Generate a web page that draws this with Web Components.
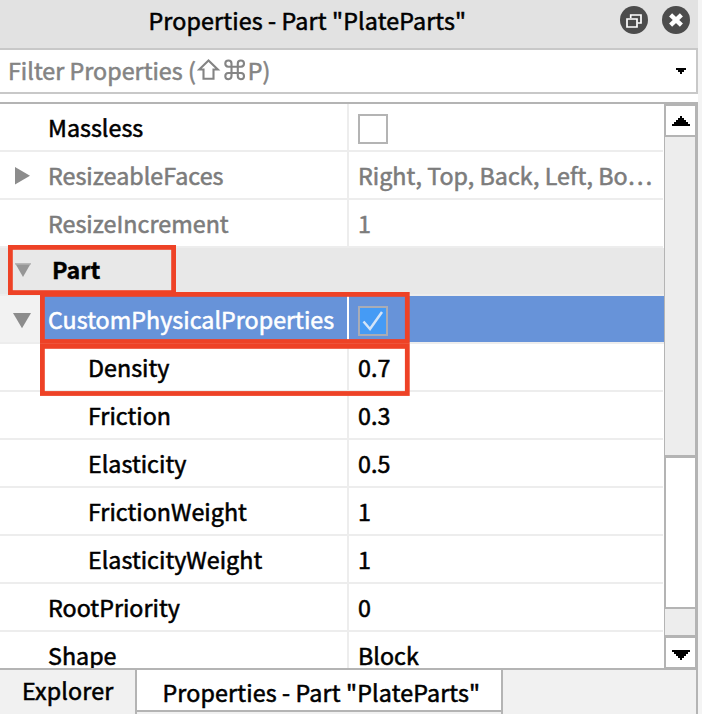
<!DOCTYPE html>
<html lang="en">
<head>
<meta charset="utf-8">
<title>Properties</title>
<style>
  html, body { margin: 0; height: 100%; }
  body { width: 702px; height: 714px; overflow: hidden; background: #f4f4f4;
    font: 400 23.25px/46px "Noto Sans CJK SC", "Noto Sans", sans-serif; color: #000; letter-spacing: .03px; -webkit-text-stroke: .55px currentColor; }
</style>
</head>
<body>
<properties-panel></properties-panel>
<script>
const define = (name, html, setup) => customElements.define(name, class extends HTMLElement {
  connectedCallback() {
    if (this.shadowRoot) return;
    const t = document.createElement('template');
    t.innerHTML = html;
    this.attachShadow({ mode: 'open' }).append(t.content.cloneNode(true));
    if (setup) setup(this, this.shadowRoot);
  }
});

define('panel-title', `
<style>
  :host { display: grid; grid-template-columns: 1fr auto; height: 48px; box-sizing: border-box; background: #e2e2e2; padding: 0 8px 0 148.5px; }
  span { line-height: 40px; white-space: nowrap; letter-spacing: .14px; }
  div { display: flex; gap: 14px; padding-top: 6px; }
  svg { display: block; }
</style>
<span><slot></slot></span>
<div>
  <svg width="28" height="28" viewBox="0 0 28 28"><circle cx="14" cy="14" r="14" fill="#4c4c4c"/><g fill="none" stroke="#fff" stroke-width="1.7"><path d="M10.7 12V9H21v8h-3.5"/><path d="M7 13h10v8H7z"/></g></svg>
  <svg width="28" height="28" viewBox="0 0 28 28"><circle cx="14" cy="14" r="14" fill="#4c4c4c"/><path d="M8.6 8.8l10.8 10.4M19.4 8.8L8.6 19.2" stroke="#fff" stroke-width="4.4"/></svg>
</div>`);

define('filter-field', `
<style>
  :host { display: flex; justify-content: space-between; align-items: center; height: 46px; box-sizing: border-box;
    border: 2px solid #c8c8c8; border-left: 0; background: #fff; color: #848484; padding: 0 10px 0 8px; }
  span { display: flex; align-items: center; line-height: 40px; margin-top: -2px; }
  svg { display: block; }
  .keys { margin: 0 1px 0 1px; }
</style>
<span><slot></slot><svg class="keys" width="50" height="24" viewBox="0 0 50 24" fill="none" stroke="#848484" stroke-width="2.1"><path d="M11.5 2.5L2.2 11.5h4.3v9.2h10v-9.2h4.3z"/><path d="M34.5 8.7h6.3v6.3h-6.3zM34.5 8.7h-3.2a3.1 3.1 0 1 1 3.2-3.1zM40.8 8.7h3.2a3.1 3.1 0 1 0-3.2-3.1zM34.5 15h-3.2a3.1 3.1 0 1 0 3.2 3.1zM40.8 15h3.2a3.1 3.1 0 1 1-3.2 3.1z"/></svg><slot name="end"></slot></span>
<svg width="10" height="6" shape-rendering="crispEdges"><path d="M0 0h10v2H8v2H6v2H4V4H2V2H0z" fill="#000"/></svg>`);

define('check-box', `
<style>
  :host { display: block; width: 26px; height: 26px; border: 2px solid #b4b4b4; background: #fff; }
  :host([checked]) { background: #459bf5; border-color: #a9acb6; }
  svg { display: none; }
  :host([checked]) svg { display: block; }
</style>
<svg width="26" height="26" viewBox="0 0 26 26"><path d="M3.5 13.5l6.5 7.5L22 4" fill="none" stroke="#d3e4f8" stroke-width="2.5"/></svg>`);

define('property-row', `
<style>
  :host { display: grid; grid-template-columns: 347px 314px; column-gap: 2px; width: 663px; height: 46px; border-bottom: 2px solid #ededed;
    background: linear-gradient(#ededed, #ededed) 347px 0 / 2px 100% no-repeat #fff; white-space: nowrap; }
  .name { display: flex; box-sizing: border-box; padding-left: 14px; }
  .arrow { width: 34px; display: flex; align-items: center; flex: none; }
  svg { display: none; }
  :host([arrow=right]) .r, :host([arrow=down]) .d, :host([group]) .g { display: block; }
  :host([child]) .name { padding-left: 54px; }
  .value { padding-left: 9px; overflow: hidden; display: flex; align-items: center; }
  :host([dim]) { color: #7c7c7c; }
  :host([group]) { background: #e8e8e8; width: 664px; font-weight: 700; -webkit-text-stroke-width: .4px; }
  :host([group]) .name { padding-left: 15px; line-height: 43px; }
  :host([group]) .arrow { width: 37px; }
  :host([group]) svg { margin-top: -3px; }
  :host([selected]) { width: 664px; color: #fff;
    background: linear-gradient(90deg, #f2f2f2 44px, transparent 0), linear-gradient(#fff, #fff) 347px 0 / 2px 100% no-repeat, #6793d9; }
  ::slotted(check-box) { margin-top: 3px; }
</style>
<div class="name"><div class="arrow">
  <svg class="r" width="17" height="18" style="margin-left:1px;margin-top:2px"><path d="M0 0L15 8.7L0 17.5z" fill="#8c8c8c"/></svg>
  <svg class="d" width="18" height="16" style="margin-left:-1px;margin-top:3px"><path d="M0 0H18L9 15.2z" fill="#8c8c8c"/></svg>
  <svg class="g" width="16" height="14"><path d="M0 0H16L8 14z" fill="#969696"/><path d="M0 .8H16" stroke="#b8b8b8" stroke-width="1.6"/></svg>
</div><span class="label"></span></div>
<div class="value"><slot></slot></div>`, (el, root) => {
  root.querySelector('.label').textContent = el.getAttribute('label');
});

define('scroll-bar', `
<style>
  :host { display: flex; flex-direction: column; box-sizing: border-box; width: 34px; height: 564px; background: #ededed;
    border-left: 1px solid #b4b4b4; border-right: 3px solid #b4b4b4; }
  div { box-sizing: border-box; background: #fff; border: solid #b4b4b4; display: flex; justify-content: center; align-items: center; flex: none; }
  .up { height: 33px; border-width: 2px 0 2px 1px; }
  .thumb { margin-top: 318px; height: 154px; border-width: 3px 0 2px 1px; }
  .down { margin-top: 26px; height: 33px; border-width: 3px 0 1px 1px; }
</style>
<div class="up"><svg width="18" height="10" shape-rendering="crispEdges"><path d="M8 0h2v2h2v2h2v2h2v2h2v2H0V8h2V6h2V4h2V2h2z"/></svg></div>
<div class="thumb"></div>
<div class="down"><svg style="margin-top:4px" width="18" height="10" shape-rendering="crispEdges"><path d="M0 0h18v2h-2v2h-2v2h-2v2h-2v2H8V8H6V6H4V4H2V2H0z"/></svg></div>`);

define('panel-tabs', `
<style>
  :host { display: grid; grid-template-columns: 135px 368px 1fr; height: 44px; background: #f1f1f1; border-right: 2px solid #b4b4b4; white-space: nowrap; letter-spacing: .14px; }
  .a { padding-left: 22px; line-height: 40px; }
  .b { border: solid #b4b4b4; border-width: 0 2px; }
  .b div { height: 40px; padding-left: 25.5px; line-height: 44px; background: #fff; border-bottom: 2px solid #b4b4b4; }
</style>
<div class="a"><slot name="first"></slot></div><div class="b"><div><slot></slot></div></div>`);

define('call-out', `
<style>
  :host { position: absolute; box-sizing: border-box; }
  svg { display: block; width: 100%; height: 100%; overflow: visible; }
</style>
<svg><rect x="2.4" y="2.4" fill="none" stroke="#ee4226" stroke-width="4.8"/></svg>`, (el, root) => {
  const r = root.querySelector('rect');
  r.setAttribute('width', parseFloat(el.style.width) - 4.8);
  r.setAttribute('height', parseFloat(el.style.height) - 4.8);
});

define('properties-panel', `
<style>
  :host { display: block; position: relative; width: 698px; height: 714px; background: #fff; }
  .table { margin-top: 8px; border-top: 2px solid #b4b4b4; border-bottom: 2px solid #b4b4b4; height: 564px; display: grid; grid-template-columns: 664px 34px; overflow: hidden; }
  .rows { height: 564px; overflow: hidden; }
</style>
<panel-title>Properties - Part "PlateParts"</panel-title>
<filter-field>Filter Properties (<span slot="end">P)</span></filter-field>
<div class="table">
  <div class="rows">
    <property-row label="Massless"><check-box></check-box></property-row>
    <property-row label="ResizeableFaces" arrow="right" dim>Right, Top, Back, Left, Bo…</property-row>
    <property-row label="ResizeIncrement" dim>1</property-row>
    <property-row label="Part" group></property-row>
    <property-row label="CustomPhysicalProperties" arrow="down" selected><check-box checked></check-box></property-row>
    <property-row label="Density" child>0.7</property-row>
    <property-row label="Friction" child>0.3</property-row>
    <property-row label="Elasticity" child>0.5</property-row>
    <property-row label="FrictionWeight" child>1</property-row>
    <property-row label="ElasticityWeight" child>1</property-row>
    <property-row label="RootPriority">0</property-row>
    <property-row label="Shape">Block</property-row>
  </div>
  <scroll-bar></scroll-bar>
</div>
<panel-tabs><span slot="first">Explorer</span>Properties - Part "PlateParts"</panel-tabs>
<call-out style="left:7.8px;top:245.3px;width:168px;height:50px"></call-out>
<call-out style="left:40px;top:292.3px;width:369.7px;height:51.9px"></call-out>
<call-out style="left:40px;top:344.4px;width:369.7px;height:51.9px"></call-out>`);
</script>
</body>
</html>
